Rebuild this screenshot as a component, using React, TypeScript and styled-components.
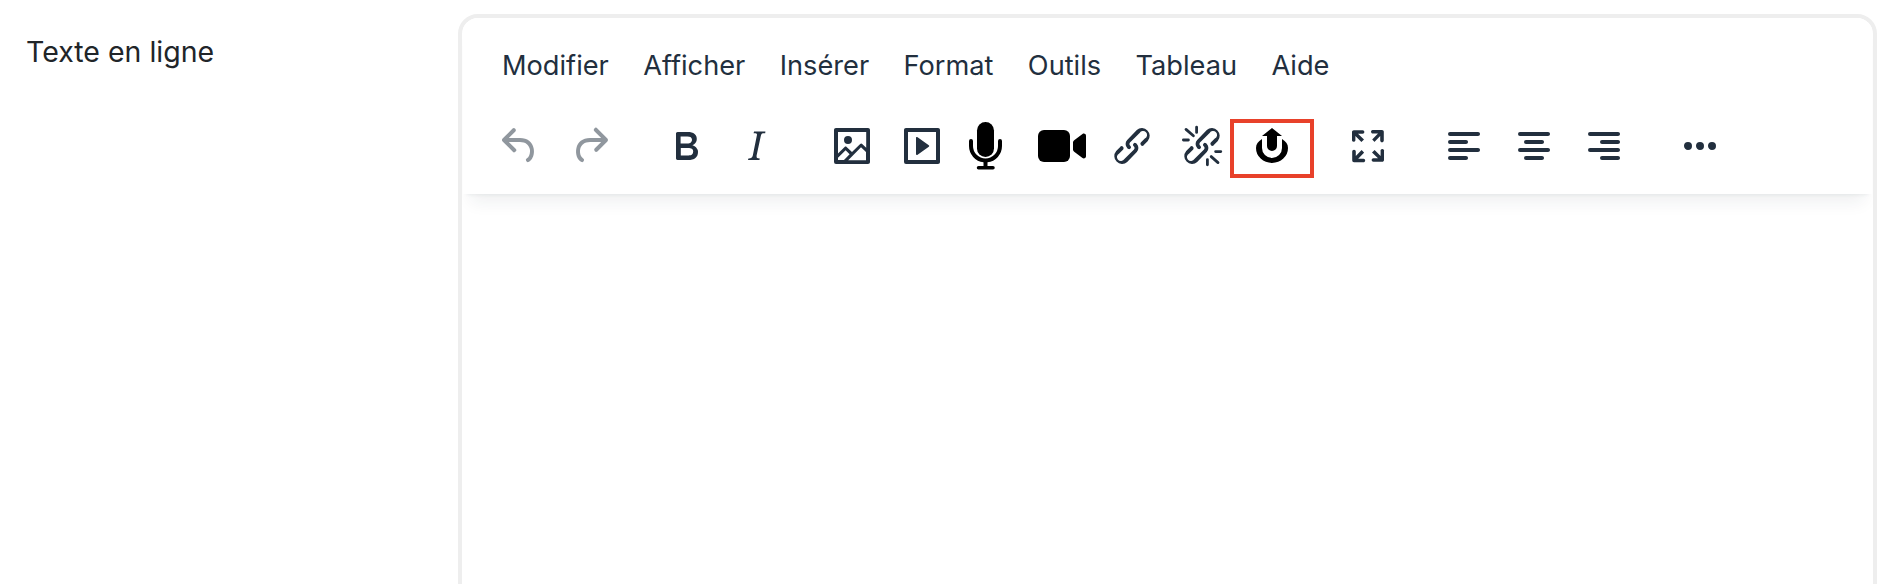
import React from 'react';
import styled, { createGlobalStyle } from 'styled-components';

const Global = createGlobalStyle`
  html, body { margin: 0; padding: 0; height: 584px; overflow: hidden; background: #fff; }
  body { font-family: Inter, "Liberation Sans", sans-serif; }
`;
const Page = styled.div`
  display: grid;
  grid-template-columns: 432px 1419px;
  padding: 14px 0 0 26px;
`;
const Label = styled.label`
  padding-top: 20px;
  font-size: 28.5px;
  line-height: 36px;
  color: #212529;
`;
const Editor = styled.div`
  box-sizing: border-box;
  height: 800px;
  border: 4px solid #eeeeee;
  border-radius: 20px;
  overflow: hidden;
  background: #fff;
`;
const Header = styled.div`
  height: 176px;
  margin: 0 1px;
  box-sizing: border-box;
  background: #fff;
  box-shadow: 0 4px 4px -4px rgba(34,47,62,.1), 0 16px 16px -8px rgba(34,47,62,.07);
`;
const MenuBar = styled.div`
  display: flex;
  gap: 34.4px;
  padding: 28px 0 0 39px;
  height: 38px;
`;
const MenuItem = styled.span`
  font-size: 27.2px;
  line-height: 39px;
  color: #222f3e;
`;
const ToolBar = styled.div`
  display: flex;
  align-items: center;
  padding: 38px 0 0 33px;
`;
const Group = styled.div`
  display: flex;
  gap: 22px;
  margin-right: 48px;
`;
const Tool = styled.button<{ $muted?: boolean }>`
  position: relative;
  width: 48px;
  height: 48px;
  padding: 0;
  border: 0;
  background: none;
  color: ${p => (p.$muted ? 'rgba(34,47,62,.5)' : '#222f3e')};
  svg { display: block; width: 48px; height: 48px; fill: currentColor; overflow: visible; }
`;
const Highlight = styled.span`
  position: absolute;
  left: -18px;
  top: -3px;
  width: 84px;
  height: 59px;
  box-sizing: border-box;
  border: 4px solid #e8412a;
`;

const Ico = ({ d }: { d: string }) => <svg viewBox="0 0 24 24"><path d={d} fillRule="evenodd" /></svg>;

const P = {
  undo: 'M6.4 8H12c3.7 0 6.2 2 6.8 5.1.6 2.7-.4 5.6-2.3 6.8a1 1 0 0 1-1-1.8c1.1-.6 1.8-2.7 1.4-4.6-.5-2.1-2.1-3.5-4.9-3.5H6.4l3.3 3.3a1 1 0 1 1-1.4 1.4l-5-5a1 1 0 0 1 0-1.4l5-5a1 1 0 0 1 1.4 1.4L6.4 8Z',
  redo: 'M17.6 10H12c-2.8 0-4.4 1.4-4.9 3.5-.4 2 .3 4 1.4 4.6a1 1 0 1 1-1 1.8c-2-1.2-2.9-4.1-2.3-6.8.6-3 3-5.1 6.8-5.1h5.6l-3.3-3.3a1 1 0 1 1 1.4-1.4l5 5a1 1 0 0 1 0 1.4l-5 5a1 1 0 0 1-1.4-1.4l3.3-3.3Z',
  bold: 'M7.8 19c-.3 0-.5 0-.6-.2l-.2-.5V5.7c0-.2 0-.4.2-.5l.6-.2h5c1.5 0 2.7.3 3.5 1 .7.6 1.1 1.4 1.1 2.5a3 3 0 0 1-.6 1.9c-.4.6-1 1-1.6 1.2.4.1.9.3 1.3.6s.8.7 1 1.2c.4.4.5 1 .5 1.6 0 1.3-.4 2.3-1.3 3-.8.7-2.1 1-3.8 1H7.8Zm5-8.3c.6 0 1.2-.1 1.6-.5.4-.3.6-.7.6-1.3 0-1.1-.8-1.7-2.3-1.7H9.3v3.5h3.4Zm.5 6c.7 0 1.3-.1 1.7-.4.4-.4.6-.9.6-1.5s-.2-1-.7-1.4c-.4-.3-1-.4-2-.4H9.4v3.8h4Z',
  italic: 'm16.7 4.7-.1.9h-.3c-.6 0-1 0-1.4.3-.3.3-.4.6-.5 1.1l-2.1 9.8v.6c0 .5.4.8 1.4.8h.2l-.2.8H8l.2-.8h.2c1.1 0 1.8-.5 2-1.5l2-9.8.1-.5c0-.6-.4-.8-1.4-.8h-.3l.2-.9h5.8Z',
  image: 'm5 15.7 3.3-3.2c.3-.3.7-.3 1 0L12 15l4.1-4c.3-.4.8-.4 1 0l2 1.9V5H5v10.7ZM5 18V19h3l2.8-2.9-2-2L5 17.9Zm14-3-2.5-2.4-6.4 6.5H19v-4ZM4 3h16c.6 0 1 .4 1 1v16c0 .6-.4 1-1 1H4a1 1 0 0 1-1-1V4c0-.6.4-1 1-1Zm6 8a2 2 0 1 0 0-4 2 2 0 0 0 0 4Z',
  embed: 'M4 3h16c.6 0 1 .4 1 1v16c0 .6-.4 1-1 1H4a1 1 0 0 1-1-1V4c0-.6.4-1 1-1Zm1 2v14h14V5H5Zm4.8 2.6 5.6 4a.5.5 0 0 1 0 .8l-5.6 4A.5.5 0 0 1 9 16V8a.5.5 0 0 1 .8-.4Z',
  link: 'M6.2 12.3a1 1 0 0 1 1.4 1.4l-2 2a2 2 0 1 0 2.6 2.8l4.8-4.8a1 1 0 0 0 0-1.4 1 1 0 1 1 1.4-1.3 2.9 2.9 0 0 1 0 4L9.6 20a3.9 3.9 0 0 1-5.5-5.5l2-2Zm11.6-.6a1 1 0 0 1-1.4-1.4l2-2a2 2 0 1 0-2.6-2.8L11 10.3a1 1 0 0 0 0 1.4A1 1 0 1 1 9.6 13a2.9 2.9 0 0 1 0-4L14.4 4a3.9 3.9 0 0 1 5.5 5.5l-2 2Z',
  fullscreen: 'm15.3 10-1.2-1.3 2.9-3h-2.3a.9.9 0 1 1 0-1.7H19c.5 0 .9.4.9.9v4.4a.9.9 0 1 1-1.8 0V7l-2.9 3Zm0 4 3 3v-2.3a.9.9 0 1 1 1.7 0V19c0 .5-.4.9-.9.9h-4.4a.9.9 0 1 1 0-1.8H17l-3-2.9 1.3-1.2ZM10 15.4l-2.9 3h2.3a.9.9 0 1 1 0 1.7H5a.9.9 0 0 1-.9-.9v-4.4a.9.9 0 1 1 1.8 0V17l2.9-3 1.2 1.3ZM8.7 10 5.7 7v2.3a.9.9 0 0 1-1.7 0V5c0-.5.4-.9.9-.9h4.4a.9.9 0 0 1 0 1.8H7l3 2.9-1.3 1.2Z',
  left: 'M5 5h14c.6 0 1 .4 1 1s-.4 1-1 1H5a1 1 0 1 1 0-2Zm0 4h8c.6 0 1 .4 1 1s-.4 1-1 1H5a1 1 0 1 1 0-2Zm0 8h8c.6 0 1 .4 1 1s-.4 1-1 1H5a1 1 0 0 1 0-2Zm0-4h14c.6 0 1 .4 1 1s-.4 1-1 1H5a1 1 0 0 1 0-2Z',
  center: 'M5 5h14c.6 0 1 .4 1 1s-.4 1-1 1H5a1 1 0 1 1 0-2Zm3 4h8c.6 0 1 .4 1 1s-.4 1-1 1H8a1 1 0 1 1 0-2Zm0 8h8c.6 0 1 .4 1 1s-.4 1-1 1H8a1 1 0 0 1 0-2Zm-3-4h14c.6 0 1 .4 1 1s-.4 1-1 1H5a1 1 0 0 1 0-2Z',
  right: 'M5 5h14c.6 0 1 .4 1 1s-.4 1-1 1H5a1 1 0 1 1 0-2Zm6 4h8c.6 0 1 .4 1 1s-.4 1-1 1h-8a1 1 0 0 1 0-2Zm0 8h8c.6 0 1 .4 1 1s-.4 1-1 1h-8a1 1 0 0 1 0-2Zm-6-4h14c.6 0 1 .4 1 1s-.4 1-1 1H5a1 1 0 0 1 0-2Z',
  more: 'M6 10a2 2 0 0 0-2 2c0 1.1.9 2 2 2a2 2 0 0 0 2-2 2 2 0 0 0-2-2Zm12 0a2 2 0 0 0-2 2c0 1.1.9 2 2 2a2 2 0 0 0 2-2 2 2 0 0 0-2-2Zm-6 0a2 2 0 0 0-2 2c0 1.1.9 2 2 2a2 2 0 0 0 2-2 2 2 0 0 0-2-2Z',
};

const Unlink = () => (
  <svg viewBox="0 0 24 24">
    <path fillRule="evenodd" d={P.link} />
    <g stroke="currentColor" strokeWidth="1.4" strokeLinecap="round" fill="none">
      <path d="M4 3.700 7.700 6.900M9.300 2.600V5.200M2.700 9H5.200M20 20.300 16.600 17.300M14.700 21.400v-2.600M21.400 14.800h-2.600" />
    </g>
  </svg>
);
const Mic = () => (
  <svg viewBox="0 0 48 48" style={{ fill: '#000' }}>
    <rect x="9" y="0" width="17" height="35" rx="8.500" />
    <path d="M1 19a2 2 0 0 1 4 0v5a12.500 12.500 0 0 0 25 0v-5a2 2 0 0 1 4 0v5a16.500 16.500 0 0 1-14.500 16.300V44H25a1.750 1.750 0 0 1 0 3.500H10.500a1.750 1.750 0 0 1 0-3.500h5v-3.700A16.500 16.500 0 0 1 1 24Z" />
  </svg>
);
const Video = () => (
  <svg viewBox="0 0 48 48" style={{ fill: '#000' }}>
    <rect x="0" y="8" width="32" height="32" rx="6" />
    <path d="M35 20.500c0-1 .4-1.700 1.200-2.300l8.300-6.300c1.500-1 3.500 0 3.500 1.800v20.600c0 1.800-2 2.800-3.500 1.800l-8.300-6.300c-.8-.6-1.200-1.300-1.200-2.300Z" />
  </svg>
);
const Upload = () => (
  <svg viewBox="0 0 48 48" style={{ fill: '#000' }}>
    <path d="M14 17C10 19.500 8 22 8 26A16 15 0 0 0 40 26C40 22 38 19.500 34 17V26A10 10 0 0 1 14 26Z" />
    <path d="M24 6 34 14H29V24A5 5 0 0 1 19 24V14H14Z" />
  </svg>
);

const menus = ['Modifier', 'Afficher', 'Insérer', 'Format', 'Outils', 'Tableau', 'Aide'];

export default function App() {
  return (
    <>
      <Global />
      <Page>
        <Label>Texte en ligne</Label>
        <Editor>
          <Header>
            <MenuBar>
              {menus.map(m => <MenuItem key={m}>{m}</MenuItem>)}
            </MenuBar>
            <ToolBar>
              <Group>
                <Tool $muted><Ico d={P.undo} /></Tool>
                <Tool $muted><Ico d={P.redo} /></Tool>
              </Group>
              <Group>
                <Tool><Ico d={P.bold} /></Tool>
                <Tool><Ico d={P.italic} /></Tool>
              </Group>
              <Group>
                <Tool><Ico d={P.image} /></Tool>
                <Tool><Ico d={P.embed} /></Tool>
                <Tool><Mic /></Tool>
                <Tool><Video /></Tool>
                <Tool><Ico d={P.link} /></Tool>
                <Tool><Unlink /></Tool>
                <Tool><Upload /><Highlight /></Tool>
              </Group>
              <Group>
                <Tool><Ico d={P.fullscreen} /></Tool>
              </Group>
              <Group>
                <Tool><Ico d={P.left} /></Tool>
                <Tool><Ico d={P.center} /></Tool>
                <Tool><Ico d={P.right} /></Tool>
              </Group>
              <Group>
                <Tool><Ico d={P.more} /></Tool>
              </Group>
            </ToolBar>
          </Header>
        </Editor>
      </Page>
    </>
  );
}
